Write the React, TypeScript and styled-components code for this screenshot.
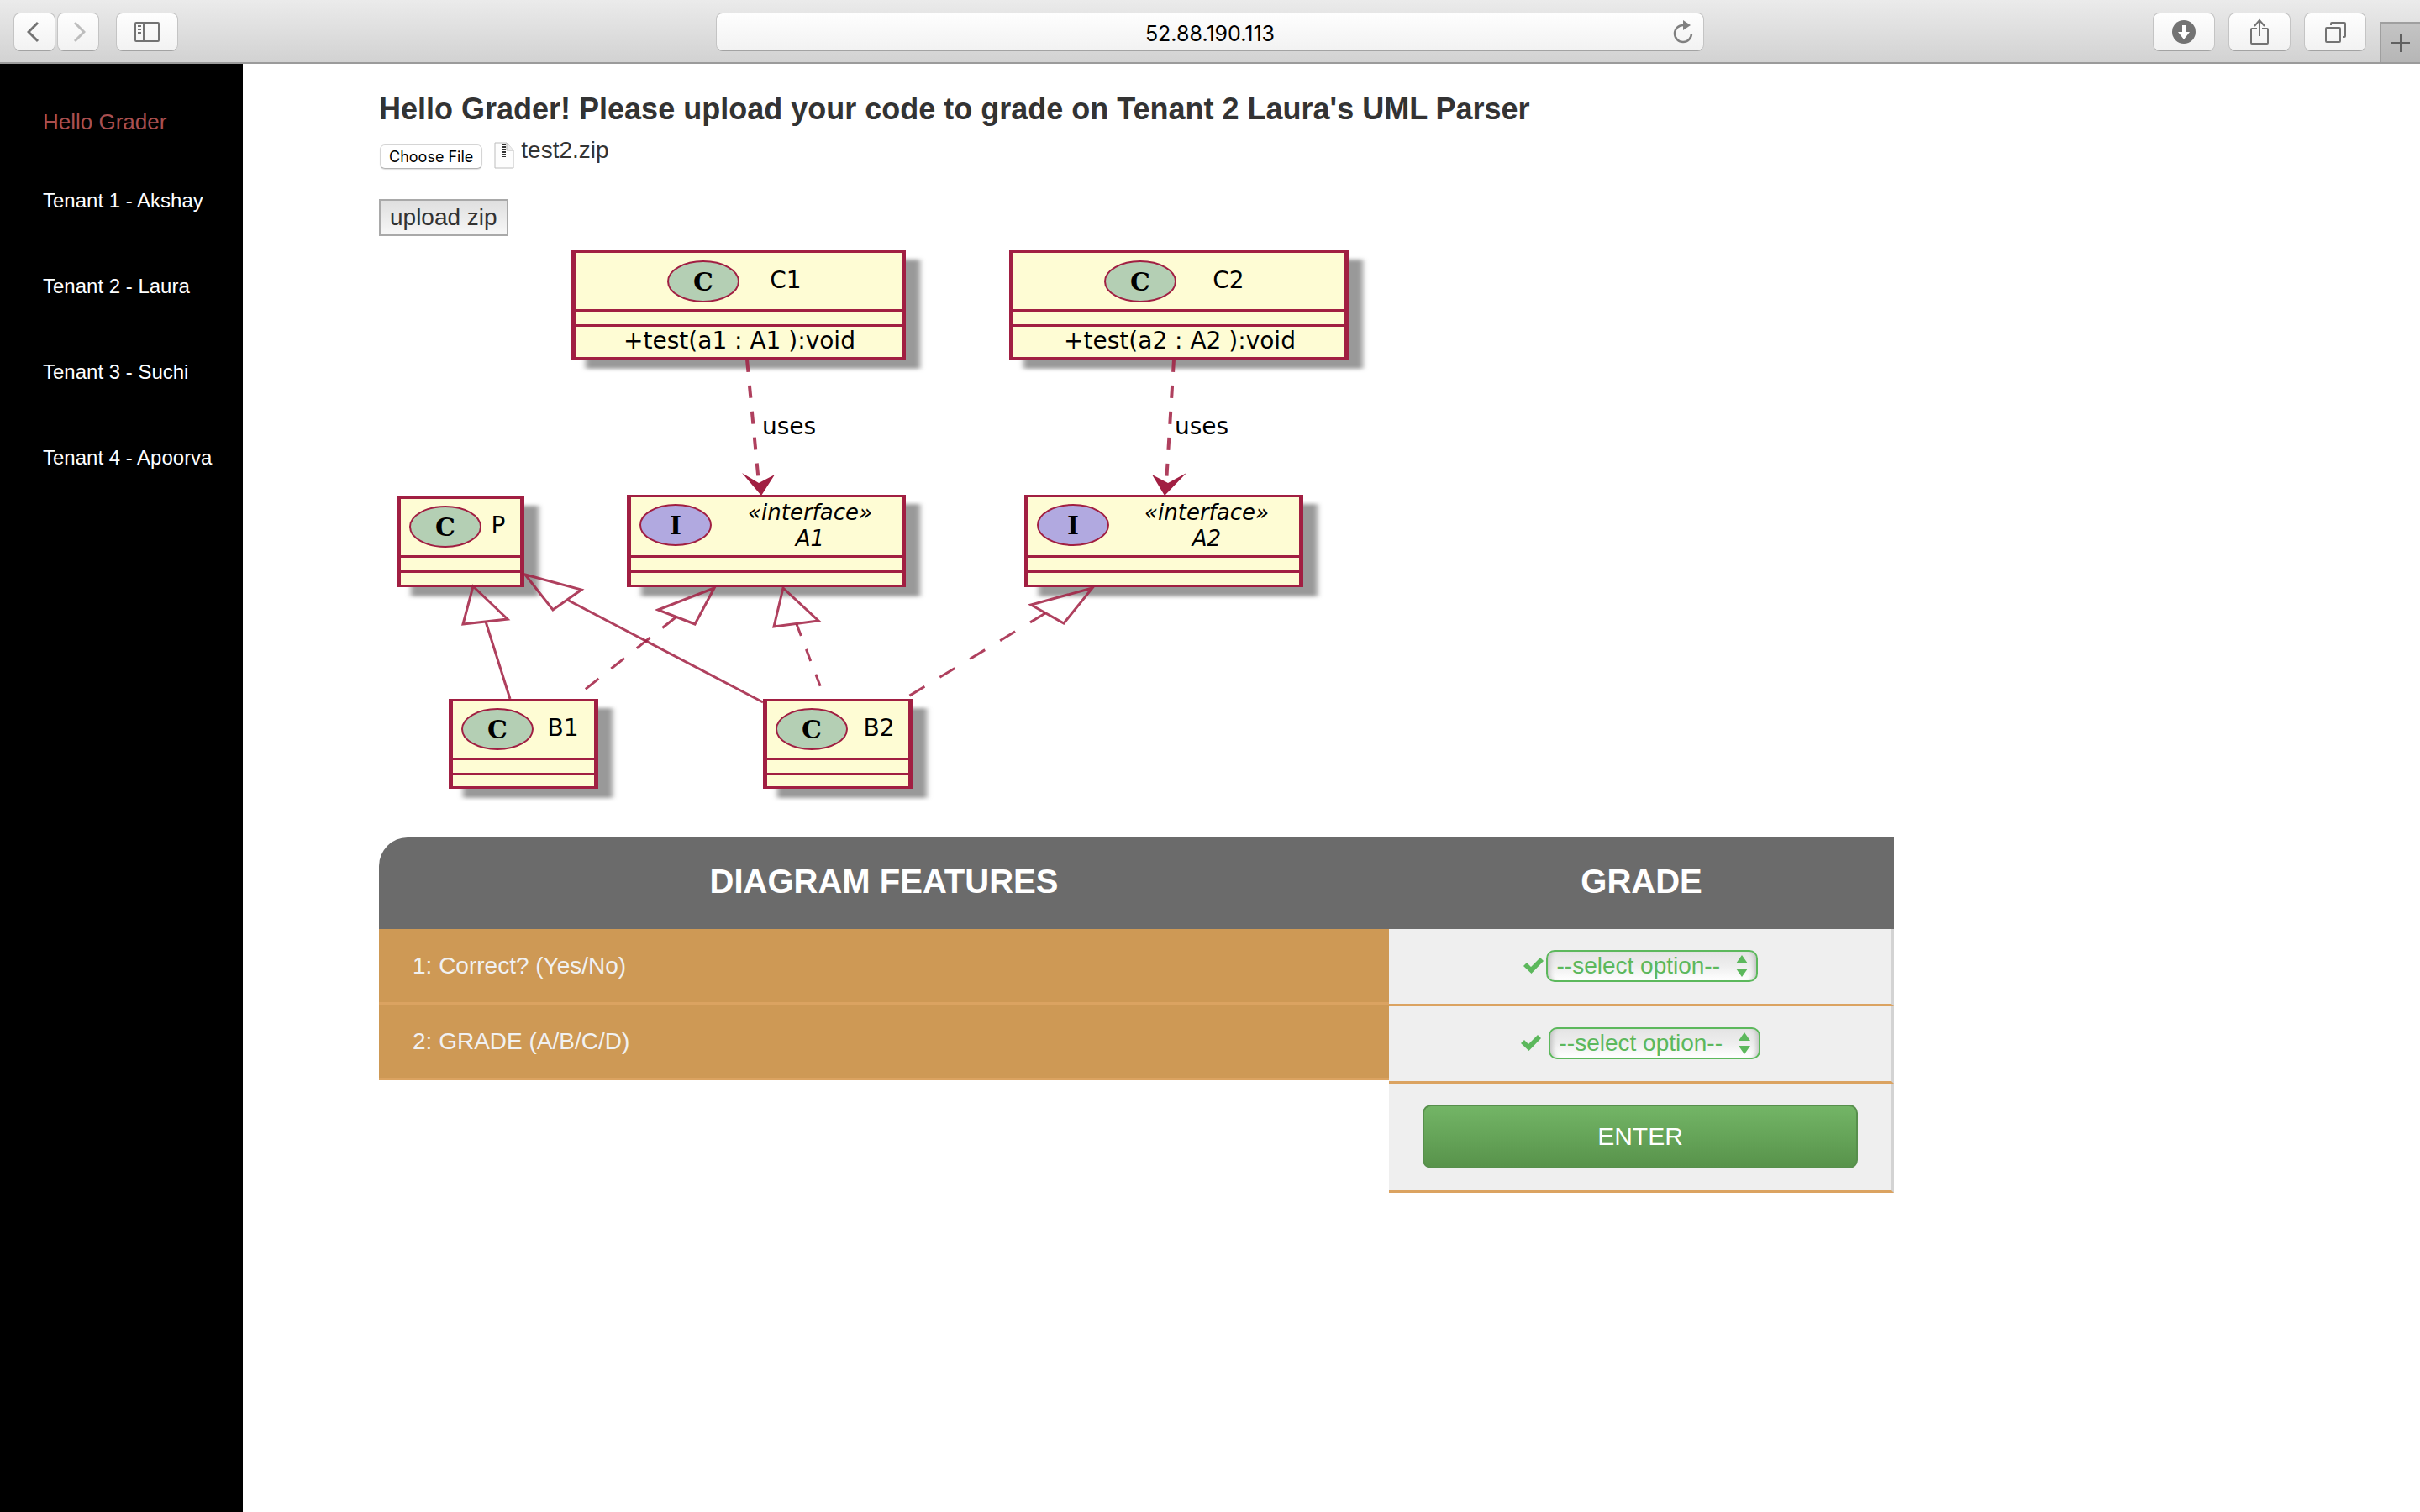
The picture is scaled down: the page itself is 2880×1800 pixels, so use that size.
import React from 'react';
import styled, { createGlobalStyle } from 'styled-components';

const sans = '"Liberation Sans", Arial, sans-serif';
const system = 'Inter, "Liberation Sans", sans-serif';

const GlobalStyle = createGlobalStyle`
  *, *::before, *::after { box-sizing: border-box; }
  html, body { margin: 0; background: #fff; }
  body { font-family: ${sans}; font-size: 28px; color: #333; }
`;

const Page = styled.div`
  display: flex;
  flex-direction: column;
  min-height: 100vh;
`;

/* Browser chrome */

const Toolbar = styled.header`
  display: grid;
  grid-template-columns: 1fr minmax(0, 1176px) 1fr;
  align-items: start;
  height: 76px;
  border-bottom: 2px solid #9b9b9b;
  background: linear-gradient(#ebebeb, #d2d2d2);
`;

const ToolGroup = styled.div<{ $end?: boolean }>`
  display: flex;
  gap: ${p => (p.$end ? 16 : 20)}px;
  justify-content: ${p => (p.$end ? 'flex-end' : 'flex-start')};
  padding: ${p => (p.$end ? '15px 0 0 16px' : '15px 16px 0')};
`;

const NavPair = styled.div`
  display: flex;
  gap: 2px;
`;

const ToolButton = styled.button<{ $narrow?: boolean }>`
  display: flex;
  align-items: center;
  justify-content: center;
  width: ${p => (p.$narrow ? 50 : 74)}px;
  height: 46px;
  padding: 0;
  border: 1px solid #c4c4c4;
  border-bottom-color: #a3a3a3;
  border-radius: 8px;
  background: linear-gradient(#fefefe, #f2f2f2);
  color: #737373;
`;

const NewTab = styled.button`
  display: flex;
  align-items: center;
  justify-content: center;
  width: 48px;
  height: 48px;
  margin-top: 11px;
  padding: 0;
  border: solid #9f9f9f;
  border-width: 2px 0 0 2px;
  background: linear-gradient(#c4c4c4, #b6b6b6);
  color: #606060;
`;

const AddressBar = styled.div`
  display: grid;
  grid-template-columns: 36px 1fr 36px;
  align-items: center;
  height: 46px;
  margin-top: 15px;
  border: 1px solid #c4c4c4;
  border-bottom-color: #a3a3a3;
  border-radius: 8px;
  background: linear-gradient(#fefefe, #f2f2f2);
`;

const AddressInput = styled.input`
  grid-column: 2;
  width: 100%;
  border: 0;
  padding: 3px 0 0;
  background: none;
  color: #000;
  font: 25px/32px ${system};
  text-align: center;
`;

const ReloadButton = styled.button`
  display: flex;
  padding: 0;
  border: 0;
  background: none;
  color: #808080;
`;

/* Page shell */

const Body = styled.div`
  display: flex;
  flex: 1;
`;

const Sidebar = styled.nav`
  flex: 0 0 289px;
  padding: 52px 16px 0 51px;
  background: #000;
`;

const Brand = styled.a`
  display: block;
  color: #a94f4f;
  font-size: 26px;
  line-height: 34px;
  text-decoration: none;
`;

const TenantList = styled.ul`
  display: flex;
  flex-direction: column;
  gap: 70px;
  margin: 61px 0 0;
  padding: 0;
  list-style: none;
`;

const TenantLink = styled.a`
  display: block;
  color: #fff;
  font-size: 24px;
  line-height: 32px;
  text-decoration: none;
  white-space: nowrap;
`;

const Main = styled.main`
  flex: 1;
  min-width: 0;
  padding: 32px 160px 48px 162px;
`;

const Title = styled.h1`
  margin: 0;
  font-size: 36px;
  line-height: 44px;
`;

const UploadForm = styled.form`
  display: flex;
  flex-direction: column;
  align-items: flex-start;
  gap: 36px;
  margin-top: 11px;
`;

const FileRow = styled.div`
  display: flex;
  align-items: flex-end;
  height: 38px;
  padding-left: 1px;
`;

const HiddenFile = styled.input`
  width: 1px;
  height: 1px;
  margin-right: -1px;
  opacity: 0;
`;

const FileButton = styled.label`
  padding: 0 10px;
  border: 1px solid #d5d5d5;
  border-bottom-color: #b4b4b4;
  border-radius: 6px;
  box-shadow: 0 1px 1px #e0e0e0;
  background: #fff;
  color: #000;
  font: 18px/27px ${system};
`;

const FileIcon = styled.svg`
  width: 24px;
  height: 32px;
  margin-left: 14px;
`;

const FileName = styled.output`
  align-self: flex-start;
  padding-left: 8px;
  line-height: 32px;
`;

const UploadButton = styled.button`
  height: 44px;
  padding: 0 11px;
  border: 2px solid #a9a9a9;
  background: linear-gradient(#dfdfdf, #f7f7f7);
  color: #333;
  font: 28px/38px ${sans};
`;

/* UML diagram */

const DiagramSvg = styled.svg`
  display: block;
  width: 100%;
  max-width: 1200px;
  height: auto;
  margin-top: 9px;
  font-family: "DejaVu Sans", sans-serif;
  font-size: 28px;
`;

/* Grading form */

const GradeForm = styled.form`
  display: grid;
  grid-template-columns: 2fr 1fr;
  align-items: start;
  max-width: 1803px;
  margin-top: 37px;
`;

const Column = styled.div``;

const ColumnHead = styled.h2<{ $rounded?: boolean }>`
  margin: 0;
  padding: 28px 0 33px;
  border-top-left-radius: ${p => (p.$rounded ? 34 : 0)}px;
  background: #6b6b6b;
  color: #fff;
  font-size: 40px;
  line-height: 48px;
  text-align: center;
`;

const FeatureLabel = styled.label`
  display: block;
  padding: 28px 40px 27px;
  border-bottom: 3px solid #dba361;
  background: #ce9955;
  color: #f1f1f1;
  line-height: 32px;
`;

const GradeCell = styled.div<{ $gap?: number }>`
  display: flex;
  align-items: center;
  justify-content: center;
  gap: ${p => p.$gap ?? 0}px;
  padding: 25px 40px 26px;
  border-right: 3px solid #d3d3d3;
  border-bottom: 3px solid #dba361;
  background: #efefef;
`;

const CheckIcon = styled.svg`
  width: 24px;
  height: 20px;
  fill: #5cb85c;
`;

const SelectBox = styled.div`
  display: grid;
  align-items: center;
  width: 252px;
`;

const Select = styled.select`
  grid-area: 1 / 1;
  width: 100%;
  height: 38px;
  padding: 0 0 0 11px;
  border: 2px solid #5cb85c;
  border-radius: 10px;
  appearance: none;
  background: linear-gradient(#e4e4e4, #eee 50%, #fff);
  box-shadow: inset 8px 0 6px -6px #bbb, inset -8px 0 6px -6px #bbb;
  color: #5cb85c;
  font: 28px/34px ${sans};
`;

const SelectArrows = styled.svg`
  grid-area: 1 / 1;
  justify-self: end;
  width: 14px;
  height: 26px;
  margin-right: 12px;
  fill: #5cb85c;
  pointer-events: none;
`;

const EnterButton = styled.button`
  width: 100%;
  height: 76px;
  border: 2px solid #578f4c;
  border-radius: 10px;
  background: linear-gradient(#73b566, #58934b);
  color: #fff;
  font: 30px/36px ${sans};
`;

const tenants = ['Tenant 1 - Akshay', 'Tenant 2 - Laura', 'Tenant 3 - Suchi', 'Tenant 4 - Apoorva'];

const RED = '#a11f42';

interface NodeProps {
  x: number;
  y: number;
  w: number;
  h: number;
  rules: [number, number];
  kind: 'C' | 'I';
  cx: number;
  cy: number;
  children?: React.ReactNode;
}

function UmlNode({ x, y, w, h, rules, kind, cx, cy, children }: NodeProps) {
  return (
    <g>
      <rect x={x + 17} y={y + 11} width={w} height={h} fill="#999" filter="url(#shadow)" />
      <rect x={x} y={y} width={w} height={h} fill={RED} />
      <rect x={x + 5} y={y + 3} width={w - 10} height={h - 6} fill="#fefcd4" />
      {rules.map(r => (
        <rect key={r} x={x} y={y + r} width={w} height="3" fill={RED} />
      ))}
      <ellipse cx={cx} cy={cy} rx="42" ry="24" fill={kind === 'C' ? '#b4cfb4' : '#b1a9e0'} stroke={RED} strokeWidth="2" />
      <text x={cx} y={cy + 11} textAnchor="middle" fontFamily="DejaVu Serif" fontWeight="bold" fontSize="30">{kind}</text>
      {children}
    </g>
  );
}

function Diagram() {
  return (
    <DiagramSvg viewBox="451 290 1200 670" role="img" aria-label="UML class diagram">
      <defs>
        <filter id="shadow" x="-10%" y="-20%" width="120%" height="140%">
          <feGaussianBlur stdDeviation="3 2" />
        </filter>
      </defs>
      <UmlNode x={680} y={298} w={398} h={130} rules={[70, 88]} kind="C" cx={837} cy={335}>
        <text x="935" y="343" textAnchor="middle">C1</text>
        <text x="880" y="415" textAnchor="middle">+test(a1 : A1 ):void</text>
      </UmlNode>
      <UmlNode x={1201} y={298} w={404} h={130} rules={[70, 88]} kind="C" cx={1357} cy={335}>
        <text x="1462" y="343" textAnchor="middle">C2</text>
        <text x="1404" y="415" textAnchor="middle">+test(a2 : A2 ):void</text>
      </UmlNode>
      <UmlNode x={472} y={591} w={152} h={108} rules={[70, 88]} kind="C" cx={530} cy={627}>
        <text x="593" y="635" textAnchor="middle">P</text>
      </UmlNode>
      <UmlNode x={746} y={589} w={332} h={110} rules={[72, 90]} kind="I" cx={804} cy={625}>
        <text x="964" y="619" textAnchor="middle" fontStyle="italic" fontSize="26">«interface»</text>
        <text x="964" y="650" textAnchor="middle" fontStyle="italic" fontSize="26">A1</text>
      </UmlNode>
      <UmlNode x={1219} y={589} w={332} h={110} rules={[72, 90]} kind="I" cx={1277} cy={625}>
        <text x="1436" y="619" textAnchor="middle" fontStyle="italic" fontSize="26">«interface»</text>
        <text x="1436" y="650" textAnchor="middle" fontStyle="italic" fontSize="26">A2</text>
      </UmlNode>
      <UmlNode x={534} y={832} w={178} h={107} rules={[70, 88]} kind="C" cx={592} cy={868}>
        <text x="670" y="876" textAnchor="middle">B1</text>
      </UmlNode>
      <UmlNode x={908} y={832} w={178} h={107} rules={[70, 88]} kind="C" cx={966} cy={868}>
        <text x="1046" y="876" textAnchor="middle">B2</text>
      </UmlNode>
      <g fill="none" stroke={RED} strokeWidth="3" strokeOpacity="0.85">
        <path d="M889 428L903 575" strokeWidth="4" strokeDasharray="15 16" />
        <path d="M1397 428L1388 575" strokeWidth="4" strokeDasharray="15 16" />
        <path d="M563 698L551 743L604 737ZM578 740L607 832" />
        <path d="M625 684L692 702L658 726ZM675 714L908 836" />
        <path d="M850 700L783 726L827 743Z" />
        <path d="M804 735L696 821" strokeDasharray="20 19" />
        <path d="M932 700L921 746L974 739Z" />
        <path d="M948 743L977 819" strokeDasharray="15 17" />
        <path d="M1300 700L1227 720L1266 742Z" />
        <path d="M1244 730L1081 829" strokeDasharray="21 21" />
      </g>
      <path d="M906 590L883 563L903 575L922 565Z" fill={RED} />
      <path d="M1386 590L1371 565L1390 575L1412 563Z" fill={RED} />
      <text x="907" y="517">uses</text>
      <text x="1398" y="517">uses</text>
    </DiagramSvg>
  );
}

function GradeSelect({ id, options }: { id: string; options: string[] }) {
  return (
    <SelectBox>
      <Select id={id} defaultValue="">
        <option value="">--select option--</option>
        {options.map(o => <option key={o}>{o}</option>)}
      </Select>
      <SelectArrows viewBox="0 0 14 26" aria-hidden="true">
        <path d="M7 0L14 10H0ZM7 26L14 16H0Z" />
      </SelectArrows>
    </SelectBox>
  );
}

function Check() {
  return (
    <CheckIcon viewBox="0 0 24 20" aria-hidden="true">
      <path d="M0 10L4 6L9 11L20 0L24 4L9.500 19Z" />
    </CheckIcon>
  );
}

export default function App() {
  return (
    <Page>
      <GlobalStyle />
      <Toolbar>
        <ToolGroup>
          <NavPair>
            <ToolButton $narrow aria-label="Back">
              <svg width="18" height="26" viewBox="0 0 18 26" fill="none" stroke="currentColor" strokeWidth="3"><path d="M13 2L2 13L13 24" /></svg>
            </ToolButton>
            <ToolButton $narrow aria-label="Forward">
              <svg width="18" height="26" viewBox="0 0 18 26" fill="none" stroke="#bdbdbd" strokeWidth="3"><path d="M5 2L16 13L5 24" /></svg>
            </ToolButton>
          </NavPair>
          <ToolButton aria-label="Show sidebar">
            <svg width="30" height="24" viewBox="0 0 30 24" fill="none" stroke="currentColor" strokeWidth="2">
              <rect x="1" y="1" width="28" height="22" rx="1" />
              <path d="M11 1V23M4 5H8M4 9H8M4 13H8" />
            </svg>
          </ToolButton>
        </ToolGroup>
        <AddressBar>
          <AddressInput aria-label="Address" defaultValue="52.88.190.113" />
          <ReloadButton aria-label="Reload">
            <svg width="24" height="28" viewBox="0 0 24 28" fill="none" stroke="currentColor" strokeWidth="2.500">
              <path d="M12 6A10 10 0 1 0 22 16" />
              <path d="M12 0L21 6L12 12Z" fill="currentColor" stroke="none" />
            </svg>
          </ReloadButton>
        </AddressBar>
        <ToolGroup $end>
          <ToolButton aria-label="Downloads">
            <svg width="28" height="28" viewBox="0 0 28 28"><circle cx="14" cy="14" r="14" fill="currentColor" /><path d="M12 6H16V14H21L14 23L7 14H12Z" fill="#fff" /></svg>
          </ToolButton>
          <ToolButton aria-label="Share">
            <svg width="24" height="32" viewBox="0 0 24 32" fill="none" stroke="currentColor" strokeWidth="2">
              <path d="M9 12H3Q2 12 2 13V29Q2 30 3 30H21Q22 30 22 29V13Q22 12 21 12H15M12 21V2M6 9L12 2L18 9" />
            </svg>
          </ToolButton>
          <ToolButton aria-label="Show all tabs">
            <svg width="26" height="26" viewBox="0 0 26 26" fill="none" stroke="currentColor" strokeWidth="2">
              <rect x="2" y="8" width="17" height="17" rx="1" />
              <path d="M8 5V3Q8 2 9 2H24Q25 2 25 3V18Q25 19 24 19H22" />
            </svg>
          </ToolButton>
          <NewTab aria-label="New tab">
            <svg width="22" height="22" viewBox="0 0 22 22" stroke="currentColor" strokeWidth="2"><path d="M11 0V22M0 11H22" /></svg>
          </NewTab>
        </ToolGroup>
      </Toolbar>
      <Body>
        <Sidebar>
          <Brand href="#">Hello Grader</Brand>
          <TenantList>
            {tenants.map(t => (
              <li key={t}><TenantLink href="#">{t}</TenantLink></li>
            ))}
          </TenantList>
        </Sidebar>
        <Main>
          <Title>Hello Grader! Please upload your code to grade on Tenant 2 Laura's UML Parser</Title>
          <UploadForm>
            <FileRow>
              <HiddenFile type="file" id="zip" />
              <FileButton htmlFor="zip">Choose File</FileButton>
              <FileIcon viewBox="0 0 24 32" aria-hidden="true">
                <path d="M1 1H15L23 10V31H1Z" fill="#fdfdfd" stroke="#bdbdbd" />
                <path d="M15 1V10H23" fill="#eee" stroke="#b5b5b5" />
                <path d="M12 2V18" stroke="#333" strokeWidth="4" strokeDasharray="2 1" />
              </FileIcon>
              <FileName htmlFor="zip">test2.zip</FileName>
            </FileRow>
            <UploadButton type="button">upload zip</UploadButton>
          </UploadForm>
          <Diagram />
          <GradeForm>
            <Column>
              <ColumnHead $rounded>DIAGRAM FEATURES</ColumnHead>
              <FeatureLabel htmlFor="correct">1: Correct? (Yes/No)</FeatureLabel>
              <FeatureLabel htmlFor="grade">2: GRADE (A/B/C/D)</FeatureLabel>
            </Column>
            <Column>
              <ColumnHead>GRADE</ColumnHead>
              <GradeCell $gap={3}>
                <Check />
                <GradeSelect id="correct" options={['Yes', 'No']} />
              </GradeCell>
              <GradeCell $gap={9}>
                <Check />
                <GradeSelect id="grade" options={['A', 'B', 'C', 'D']} />
              </GradeCell>
              <GradeCell>
                <EnterButton type="button">ENTER</EnterButton>
              </GradeCell>
            </Column>
          </GradeForm>
        </Main>
      </Body>
    </Page>
  );
}
